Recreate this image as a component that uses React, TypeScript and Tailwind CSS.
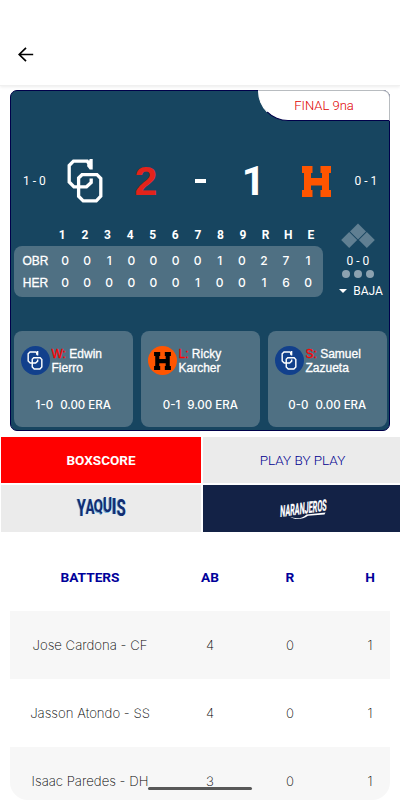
import clsx from 'clsx'

const innings = ['1', '2', '3', '4', '5', '6', '7', '8', '9', 'R', 'H', 'E']

const lines = [
  { team: 'OBR', values: ['0', '0', '1', '0', '0', '0', '0', '1', '0', '2', '7', '1'] },
  { team: 'HER', values: ['0', '0', '0', '0', '0', '0', '1', '0', '0', '1', '6', '0'] },
]

const pitchers = [
  { role: 'W:', first: 'Edwin', last: 'Fierro', record: '1-0', era: '0.00 ERA', team: 'OBR' },
  { role: 'L:', first: 'Ricky', last: 'Karcher', record: '0-1', era: '9.00 ERA', team: 'HER' },
  { role: 'S:', first: 'Samuel', last: 'Zazueta', record: '0-0', era: '0.00 ERA', team: 'OBR' },
]

const batters = [
  { name: 'Jose Cardona - CF', stats: ['4', '0', '1'] },
  { name: 'Jasson Atondo - SS', stats: ['4', '0', '1'] },
  { name: 'Isaac Paredes - DH', stats: ['3', '0', '1'] },
]

function ObregonLogo({ className }: { className?: string }) {
  return (
    <svg viewBox="0 0 36 44" className={className} fill="none" aria-hidden="true">
      <path
        d="M22.7 0H25.7V10.5H22.7L20 7"
        fill="#fff"
      />
      <g stroke="#fff" strokeWidth="3.3">
        <path d="M24 8L20.2 2.2H6.5L2.2 6.5V23L7 27.8H19.5L24.2 23.5V19.5" />
        <path d="M15 15.7H30L33.8 19.5V37.2L29.3 41.8H16.2L11.6 37.2V19Z" />
      </g>
    </svg>
  )
}

function HermosilloLogo({ className }: { className?: string }) {
  return (
    <svg viewBox="0 0 29 31" className={className} fill="currentColor" aria-hidden="true">
      <path d="M0 0H10.5V7H9V12H20V7H18.5V0H29V7H27V24H29V31H18.5V24H20V19.5H9V24H10.5V31H0V24H2V7H0Z" />
    </svg>
  )
}

function TeamBadge({ team }: { team: string }) {
  return (
    <div
      className={clsx(
        'flex size-[29px] shrink-0 items-center justify-center rounded-full',
        team === 'OBR' ? 'bg-[#12408c]' : 'bg-[#ff5500]'
      )}
    >
      {team === 'OBR' ? (
        <ObregonLogo className="h-[19px] w-[16px]" />
      ) : (
        <HermosilloLogo className="h-[18px] w-[17px] text-black" />
      )}
    </div>
  )
}

// letters share a top edge, the baseline arches up in the middle
const yaquisLetters = [
  { letter: 'Y', className: 'w-[9px] scale-x-[0.9] scale-y-[1.5]' },
  { letter: 'A', className: 'w-[8.5px] scale-x-[0.82] scale-y-[1.32]' },
  { letter: 'Q', className: 'w-[9px] scale-x-[0.84] scale-y-[1.2]' },
  { letter: 'U', className: 'w-[9px] scale-x-[0.86] scale-y-[1.22]' },
  { letter: 'I', className: 'w-[4.5px] scale-x-[1.05] scale-y-[1.34]' },
  { letter: 'S', className: 'w-[8.5px] scale-x-[0.92] scale-y-[1.5]' },
]

function YaquisLogo() {
  return (
    <div className="-mt-[7px] flex h-[12px] w-[49px] justify-between font-[Roboto,sans-serif] text-[16px] leading-[12px] font-bold text-[#132c72] [text-shadow:-1px_0.3px_0_#6db4dd]">
      {yaquisLetters.map(({ letter, className }) => (
        <span key={letter} className={clsx('flex origin-top justify-center', className)}>
          {letter}
        </span>
      ))}
    </div>
  )
}

function NaranjerosLogo() {
  return (
    <svg viewBox="0 0 50 22" className="h-[22px] w-[50px] overflow-visible" aria-label="Naranjeros">
      <g transform="translate(1 19) rotate(-8) skewX(-10)">
        <text
          fontFamily="Roboto, sans-serif"
          fontWeight="700"
          fontSize="15.5"
          textLength="47"
          lengthAdjust="spacingAndGlyphs"
          fill="#fff"
          stroke="#fff"
          strokeWidth="0.3"
        >
          NARANJEROS
        </text>
      </g>
      <path d="M11 18.8C17 21.4 23 20.6 27.5 16.4L46.5 14.4L45.5 16.4L29 17.8C23 22 16 22 11 18.8Z" fill="#fff" />
    </svg>
  )
}

function ScoreCard() {
  return (
    <div className="mx-2.5 mt-[4px] h-[341px] rounded-[7px] border border-[#00004a] bg-[#174560] text-white">
      <div className="flex justify-end">
        <div className="-mt-px -mr-px flex h-[31px] w-[132px] items-center justify-center rounded-tr-[7px] rounded-bl-[30px] border border-t-[#b8bcc0] border-r-[#b8bcc0] border-b-[#00004a] border-l-white bg-white font-[Roboto,sans-serif] text-[13px] font-light text-[#e00000]">
          FINAL 9na
        </div>
      </div>

      <div className="mt-[33px] flex h-[54px] items-center font-[Roboto,sans-serif]">
        <span className="w-[47px] text-center text-[12px]">1 - 0</span>
        <ObregonLogo className="ml-[9px] h-[44px] w-[36px]" />
        <span className="ml-[31px] w-[24px] text-center font-['Liberation_Sans',sans-serif] text-[41px] leading-none font-bold text-[#e3231b]">
          2
        </span>
        <span className="ml-[37px] h-[4px] w-[11px] bg-white" />
        <span className="ml-[34px] w-[27px] text-center text-[41px] leading-none font-bold">1</span>
        <HermosilloLogo className="ml-[35px] h-[31px] w-[29px] text-[#ff5500]" />
        <span className="ml-[23px] w-[24px] text-center text-[12px] whitespace-nowrap">0 - 1</span>
      </div>

      <div className="flex h-[89px] pt-[19px]">
        <div className="ml-[3px] w-[309px]">
          <div className="ml-[37px] flex h-[16px] items-center font-[Roboto,sans-serif] text-[12px] font-bold">
            {innings.map((inning) => (
              <span key={inning} className="w-[22.6px] text-center">
                {inning}
              </span>
            ))}
          </div>
          <div className="mt-[3px] h-[51px] rounded-lg bg-[#4f7083] pt-[4px] font-[Inter,sans-serif] text-[12px] font-medium">
            {lines.map((line) => (
              <div key={line.team} className="flex h-[22px] items-center">
                <span className="w-[40px] pl-[3px] text-center font-['Liberation_Sans',sans-serif] text-[12px] [-webkit-text-stroke:0.3px_white]">
                  {line.team}
                </span>
                {line.values.map((value, index) => (
                  <span key={index} className="w-[22.1px] text-center">
                    {value}
                  </span>
                ))}
              </div>
            ))}
          </div>
        </div>

        <div className="ml-[12px] flex w-[46px] flex-col items-center font-[Roboto,sans-serif] text-[12px]">
          <svg viewBox="0 0 34 26" className="-mt-[4px] h-[26px] w-[34px] shrink-0" fill="#607f92" aria-hidden="true">
            <path d="M17 0.5L25 8.5L17 16.5L9 8.5Z" />
            <path d="M8.2 9L16.2 17L8.2 25L0.2 17Z" />
            <path d="M25.8 9L33.8 17L25.8 25L17.8 17Z" />
          </svg>
          <span className="mt-[4px] leading-[16px] whitespace-nowrap">0 - 0</span>
          <div className="mt-px flex gap-[4px]">
            <span className="size-[8px] rounded-full bg-[#8ca2b0]" />
            <span className="size-[8px] rounded-full bg-[#8ca2b0]" />
            <span className="size-[8px] rounded-full bg-[#8ca2b0]" />
          </div>
          <div className="mt-[5px] flex items-center gap-[6px] pl-[6px] leading-[16px]">
            <svg viewBox="0 0 8 4" className="h-[4px] w-[8px]" fill="currentColor" aria-hidden="true">
              <path d="M0 0H8L4 4Z" />
            </svg>
            BAJA
          </div>
        </div>
      </div>

      <div className="mt-[34px] flex gap-[7.5px] pl-[2.5px] font-['Liberation_Sans',sans-serif] text-[12px]">
        {pitchers.map((pitcher) => (
          <div key={pitcher.last} className="h-[96px] w-[119.5px] rounded-lg bg-[#4f7083]">
            <div className="flex items-center gap-[2px] pt-[15px] pl-[7px]">
              <TeamBadge team={pitcher.team} />
              <p className="leading-[14px] whitespace-nowrap [-webkit-text-stroke:0.3px_currentColor]">
                <span className="text-[#ff0000]">{pitcher.role}</span> {pitcher.first}
                <br />
                {pitcher.last}
              </p>
            </div>
            <div className="mt-[22px] flex justify-center gap-[7px] font-[Inter,sans-serif] text-[11.5px] leading-[16px] font-medium">
              <span>{pitcher.record}</span>
              <span>{pitcher.era}</span>
            </div>
          </div>
        ))}
      </div>
    </div>
  )
}

function Tabs() {
  return (
    <div className="mt-[6px] ml-px grid grid-cols-[200px_197px] gap-x-[2px] gap-y-[2px] font-[Roboto,sans-serif] text-[13.5px]">
      <div className="flex h-[46px] items-center justify-center bg-[#ff0000] font-bold text-white">BOXSCORE</div>
      <div className="flex h-[46px] items-center justify-center bg-[#ebebeb] pl-[2px] font-light text-[#00008f]">
        PLAY BY PLAY
      </div>
      <div className="flex h-[47px] items-center justify-center bg-[#ebebeb]">
        <YaquisLogo />
      </div>
      <div className="flex h-[47px] items-center justify-center bg-[#132246] pl-1">
        <NaranjerosLogo />
      </div>
    </div>
  )
}

function BattersTable() {
  return (
    <div className="mx-2.5 overflow-hidden rounded-b-[18px]">
      <div className="flex h-[79px] items-center pt-[12px] font-[Roboto,sans-serif] text-[13.7px] font-bold text-[#00009a]">
        <span className="w-[160px] shrink-0 text-center">BATTERS</span>
        {['AB', 'R', 'H'].map((column) => (
          <span key={column} className="w-[80px] shrink-0 text-center">
            {column}
          </span>
        ))}
      </div>
      {batters.map((batter, index) => (
        <div
          key={batter.name}
          className={clsx(
            'flex h-[68px] items-start pt-[25px] font-[Inter,sans-serif] text-[13.2px] font-extralight text-black last:h-[53px]',
            index % 2 === 0 ? 'bg-[#f7f7f7]' : 'bg-white'
          )}
        >
          <span className="w-[160px] shrink-0 text-center">{batter.name}</span>
          {batter.stats.map((stat, i) => (
            <span key={i} className="w-[80px] shrink-0 text-center">
              {stat}
            </span>
          ))}
        </div>
      ))}
    </div>
  )
}

export default function App() {
  return (
    <div className="relative h-[800px] w-[400px] overflow-hidden bg-white">
      <header className="flex h-[86px] items-end border-b border-[#f0f0f0] pb-[22px] pl-[18px] shadow-[0_1px_3px_rgba(0,0,0,0.08)]">
        <svg viewBox="0 0 16 16" className="size-4" fill="none" stroke="#000" strokeWidth="1.7" aria-hidden="true">
          <path d="M15.2 7.5H1.5M8 .8L1.2 7.5L8 14.2" />
        </svg>
      </header>
      <ScoreCard />
      <Tabs />
      <BattersTable />
      <div className="absolute bottom-[10px] left-[148px] h-[3.5px] w-[104px] rounded-full bg-[#585858]" />
    </div>
  )
}
